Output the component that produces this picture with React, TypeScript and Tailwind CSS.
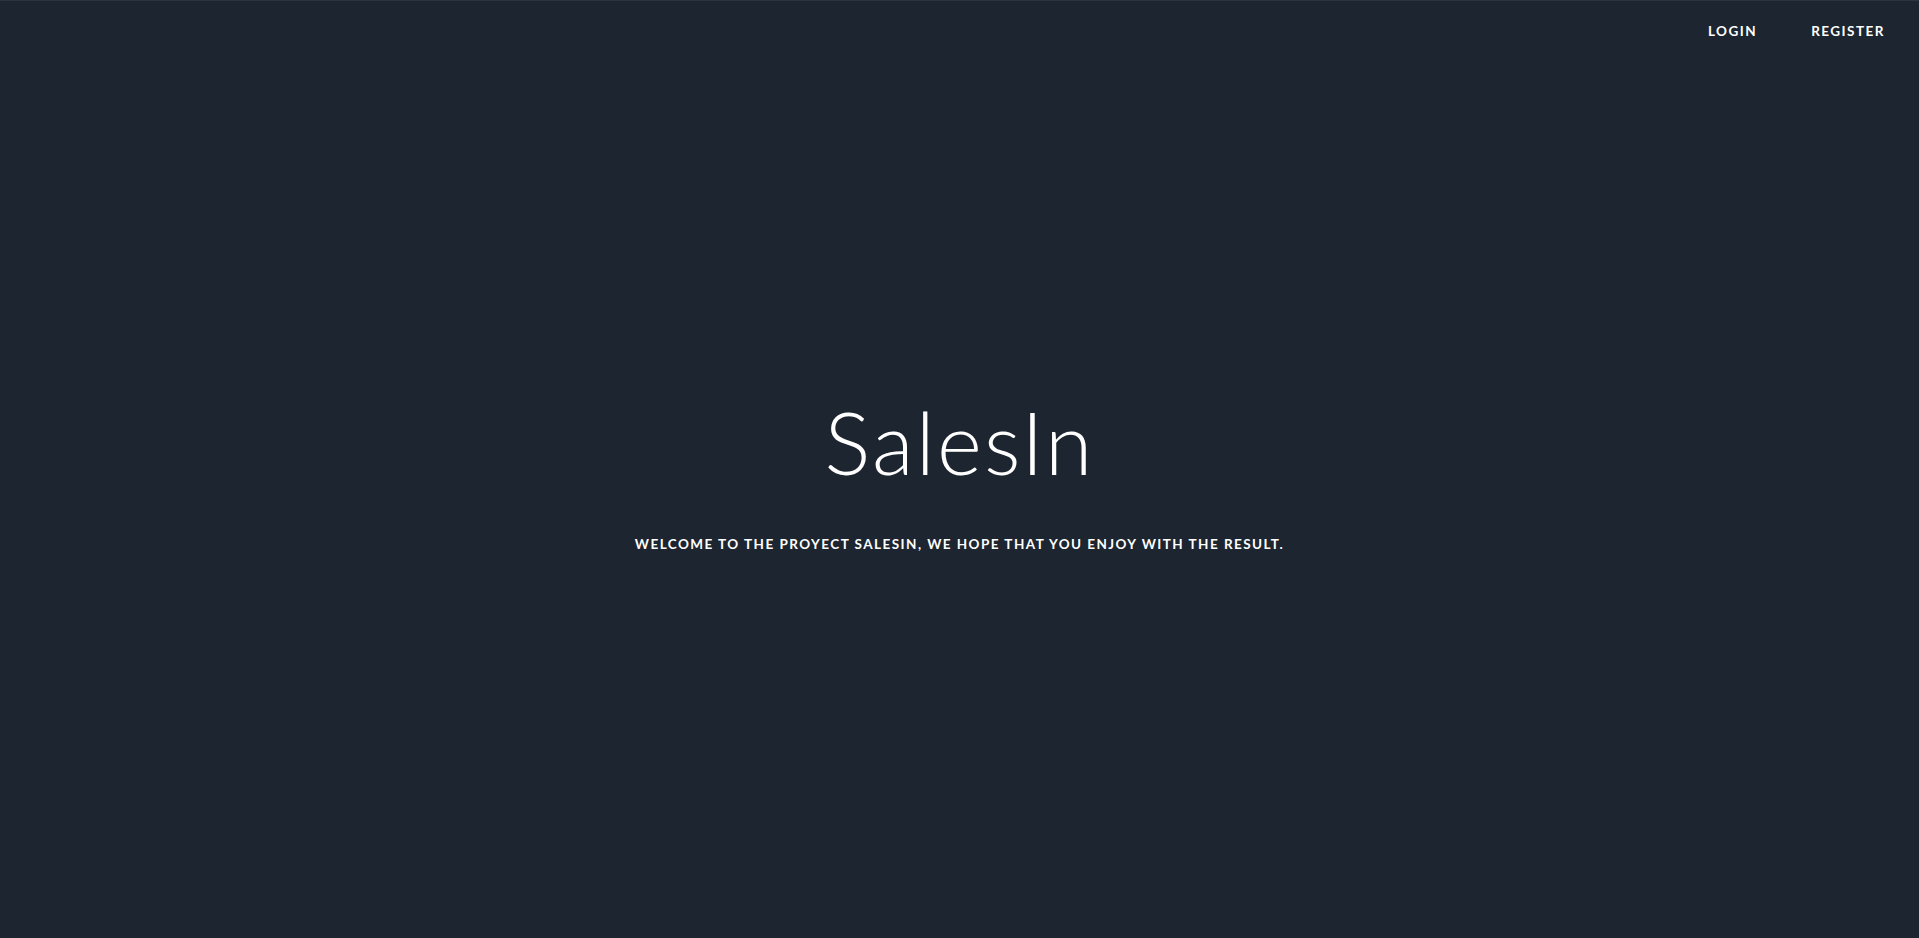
export default function App() {
  return (
    <div
      className="w-full h-[938px] bg-[#1c2530] border-t border-[#2c3440] flex flex-col text-white"
      style={{ fontFamily: "Lato, 'Open Sans', sans-serif" }}
    >
      <nav className="flex justify-end items-center h-[60px] pr-[34px] gap-[54px]">
        <a className="text-[13.5px] font-bold tracking-[0.11em] text-white">LOGIN</a>
        <a className="text-[13.5px] font-bold tracking-[0.11em] text-white">REGISTER</a>
      </nav>
      <main className="flex-1 flex flex-col items-center pt-[338px]">
        <h1 className="text-[86px] font-light leading-none tracking-[0.025em]">SalesIn</h1>
        <p className="mt-[49px] text-[13.5px] font-bold tracking-[0.108em]">
          WELCOME TO THE PROYECT SALESIN, WE HOPE THAT YOU ENJOY WITH THE RESULT.
        </p>
      </main>
    </div>
  );
}
